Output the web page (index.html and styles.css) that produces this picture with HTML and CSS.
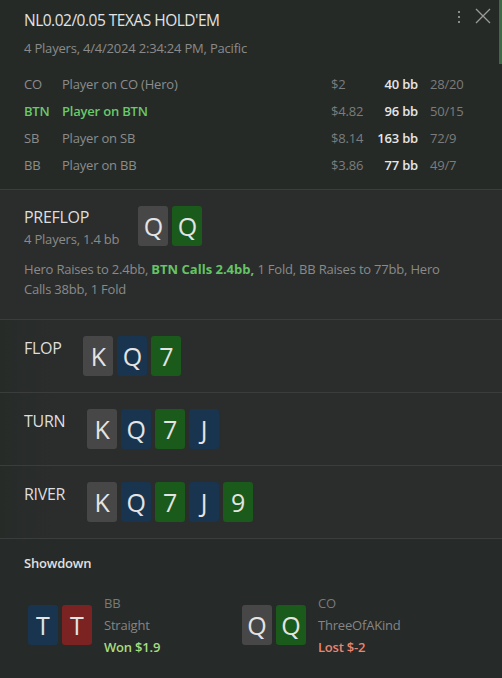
FILE: index.html
```html
<!DOCTYPE html>
<html lang="en">
<head>
    <meta charset="UTF-8">
    <meta name="viewport" content="width=device-width, initial-scale=1.0">
    <title>Hand Replay</title>
    <link rel="stylesheet" href="styles.css">
</head>
<body>
    <div class="hand">
        <header class="hand-head">
            <div class="head-top">
                <h1 class="title">NL0.02/0.05 TEXAS HOLD'EM</h1>
                <div class="head-actions">
                    <svg class="icon-more" width="6" height="16" viewBox="0 0 6 16">
                        <rect x="2" y="2" width="2" height="2" fill="#8a8a8a"/>
                        <rect x="2" y="7" width="2" height="2" fill="#8a8a8a"/>
                        <rect x="2" y="12" width="2" height="2" fill="#8a8a8a"/>
                    </svg>
                    <svg class="icon-close" width="16" height="16" viewBox="0 0 16 16">
                        <path d="M1 1 L15 15 M15 1 L1 15" stroke="#9a9a9a" stroke-width="1.3" fill="none"/>
                    </svg>
                </div>
            </div>
            <div class="subtitle">4 Players, 4/4/2024 2:34:24 PM, Pacific</div>

            <div class="players">
                <div class="player">
                    <span class="pos">CO</span>
                    <span class="name">Player on CO (Hero)</span>
                    <span class="money">$2</span>
                    <span class="bb">40 bb</span>
                    <span class="stats">28/20</span>
                </div>
                <div class="player active">
                    <span class="pos">BTN</span>
                    <span class="name">Player on BTN</span>
                    <span class="money">$4.82</span>
                    <span class="bb">96 bb</span>
                    <span class="stats">50/15</span>
                </div>
                <div class="player">
                    <span class="pos">SB</span>
                    <span class="name">Player on SB</span>
                    <span class="money">$8.14</span>
                    <span class="bb">163 bb</span>
                    <span class="stats">72/9</span>
                </div>
                <div class="player">
                    <span class="pos">BB</span>
                    <span class="name">Player on BB</span>
                    <span class="money">$3.86</span>
                    <span class="bb">77 bb</span>
                    <span class="stats">49/7</span>
                </div>
            </div>
        </header>

        <section class="street preflop">
            <div class="street-row">
                <div class="street-label">
                    <div class="street-name">PREFLOP</div>
                    <div class="street-info">4 Players, 1.4 bb</div>
                </div>
                <div class="cards">
                    <span class="card gray">Q</span>
                    <span class="card green">Q</span>
                </div>
            </div>
            <p class="actions">Hero Raises to 2.4bb, <b class="hl">BTN Calls 2.4bb,</b> 1 Fold, BB Raises to 77bb, Hero Calls 38bb, 1 Fold</p>
        </section>

        <section class="street board">
            <div class="street-row">
                <div class="street-name">FLOP</div>
                <div class="cards">
                    <span class="card gray">K</span>
                    <span class="card blue">Q</span>
                    <span class="card green">7</span>
                </div>
            </div>
        </section>

        <section class="street board">
            <div class="street-row">
                <div class="street-name">TURN</div>
                <div class="cards">
                    <span class="card gray">K</span>
                    <span class="card blue">Q</span>
                    <span class="card green">7</span>
                    <span class="card blue">J</span>
                </div>
            </div>
        </section>

        <section class="street board">
            <div class="street-row">
                <div class="street-name">RIVER</div>
                <div class="cards">
                    <span class="card gray">K</span>
                    <span class="card blue">Q</span>
                    <span class="card green">7</span>
                    <span class="card blue">J</span>
                    <span class="card green">9</span>
                </div>
            </div>
        </section>

        <section class="showdown">
            <h2 class="showdown-title">Showdown</h2>
            <div class="showdown-list">
                <div class="shown">
                    <div class="cards">
                        <span class="card blue">T</span>
                        <span class="card red">T</span>
                    </div>
                    <div class="shown-info">
                        <div class="shown-pos">BB</div>
                        <div class="shown-hand">Straight</div>
                        <div class="result won">Won $1.9</div>
                    </div>
                </div>
                <div class="shown">
                    <div class="cards">
                        <span class="card gray">Q</span>
                        <span class="card green">Q</span>
                    </div>
                    <div class="shown-info">
                        <div class="shown-pos">CO</div>
                        <div class="shown-hand">ThreeOfAKind</div>
                        <div class="result lost">Lost $-2</div>
                    </div>
                </div>
            </div>
        </section>
    </div>
    <div class="scroll-thumb"></div>
</body>
</html>
```

FILE: styles.css
```css
body {
    margin: 0;
    background-color: #262a28;
    font-family: "Open Sans", "Noto Sans", sans-serif;
    color: #8a8a8a;
    overflow: hidden;
}

.hand {
    width: 502px;
}

/* header */
.hand-head {
    background-color: #252a27;
    padding: 8px 24px 11px 24px;
    border-bottom: 1px solid #3a3d3c;
}

.head-top {
    display: flex;
    justify-content: space-between;
    align-items: flex-start;
}

.title {
    margin: 0;
    font-size: 15.5px;
    font-weight: normal;
    line-height: 24px;
    color: #e2e2e2;
    letter-spacing: -0.5px;
}

.head-actions {
    display: flex;
    gap: 13px;
    margin-right: -13px;
}

.icon-more {
    margin-top: 1px;
}

.subtitle {
    margin-top: 6px;
    font-size: 13px;
    line-height: 20px;
    color: #8a8a8a;
    letter-spacing: -0.2px;
}

.players {
    margin-top: 12px;
}

.player {
    display: grid;
    grid-template-columns: 38px 269px 46px 41px 1fr;
    height: 27px;
    align-items: center;
    font-size: 13px;
    letter-spacing: -0.2px;
}

.player .pos,
.player .name {
    color: #8c8c8c;
}

.player .money {
    color: #7c7c7c;
}

.player .bb {
    text-align: right;
    font-weight: 600;
    color: #e6e6e6;
    white-space: nowrap;
}

.player .stats {
    padding-left: 12px;
    color: #7c7c7c;
}

.player.active .pos,
.player.active .name {
    color: #69c96b;
    font-weight: 600;
}

/* streets */
.street {
    background-color: #2a2d2c;
    border-bottom: 1px solid #3a3d3c;
    padding: 16px 24px;
}

.street.board {
    background: linear-gradient(to right, #262b28 0, #2b2d2d 60px);
}

.street.preflop {
    padding-bottom: 20px;
}

.street-row {
    display: flex;
    align-items: flex-start;
    gap: 22px;
}

.preflop .street-row {
    gap: 19px;
}

.street-name {
    font-size: 16px;
    line-height: 22px;
    color: #dedede;
    letter-spacing: -0.3px;
}

.board .street-name {
    margin-top: 1px;
}

.street-info {
    margin-top: 2px;
    font-size: 13px;
    line-height: 18px;
    color: #8a8a8a;
    letter-spacing: -0.2px;
}

.actions {
    margin: 11px 0 0 0;
    max-width: 440px;
    font-size: 13px;
    line-height: 20px;
    color: #8a8a8a;
    letter-spacing: -0.2px;
}

.hl {
    color: #66c466;
    font-weight: 700;
    letter-spacing: 0;
}

/* cards */
.cards {
    display: flex;
    gap: 4px;
}

.card {
    width: 30px;
    height: 40px;
    border-radius: 3px;
    display: flex;
    align-items: center;
    justify-content: center;
    font-size: 25px;
    color: #e4e4e4;
    line-height: 1;
}

.card.gray {
    background-color: #474747;
}

.card.blue {
    background-color: #19344f;
}

.card.green {
    background-color: #1a5a1a;
}

.card.red {
    background-color: #7b2222;
}

/* showdown */
.showdown {
    background-color: #262a28;
    padding: 15px 24px 20px 24px;
}

.showdown-title {
    margin: 0;
    font-size: 13px;
    line-height: 18px;
    font-weight: 600;
    color: #e0e0e0;
    letter-spacing: -0.2px;
}

.showdown-list {
    display: grid;
    grid-template-columns: 214px 214px;
    padding-left: 4px;
    margin-top: 20px;
}

.shown {
    display: flex;
    align-items: center;
    gap: 12px;
}

.shown-info {
    font-size: 13px;
    line-height: 22px;
    letter-spacing: -0.2px;
}

.shown-pos {
    color: #7a7a7a;
}

.shown-hand {
    color: #858585;
}

.result {
    font-weight: 600;
}

.result.won {
    color: #a7dc80;
}

.result.lost {
    color: #ea8470;
}

.scroll-thumb {
    position: absolute;
    top: 0;
    right: 0;
    width: 3px;
    height: 64px;
    background-color: #3f6a48;
}
```
